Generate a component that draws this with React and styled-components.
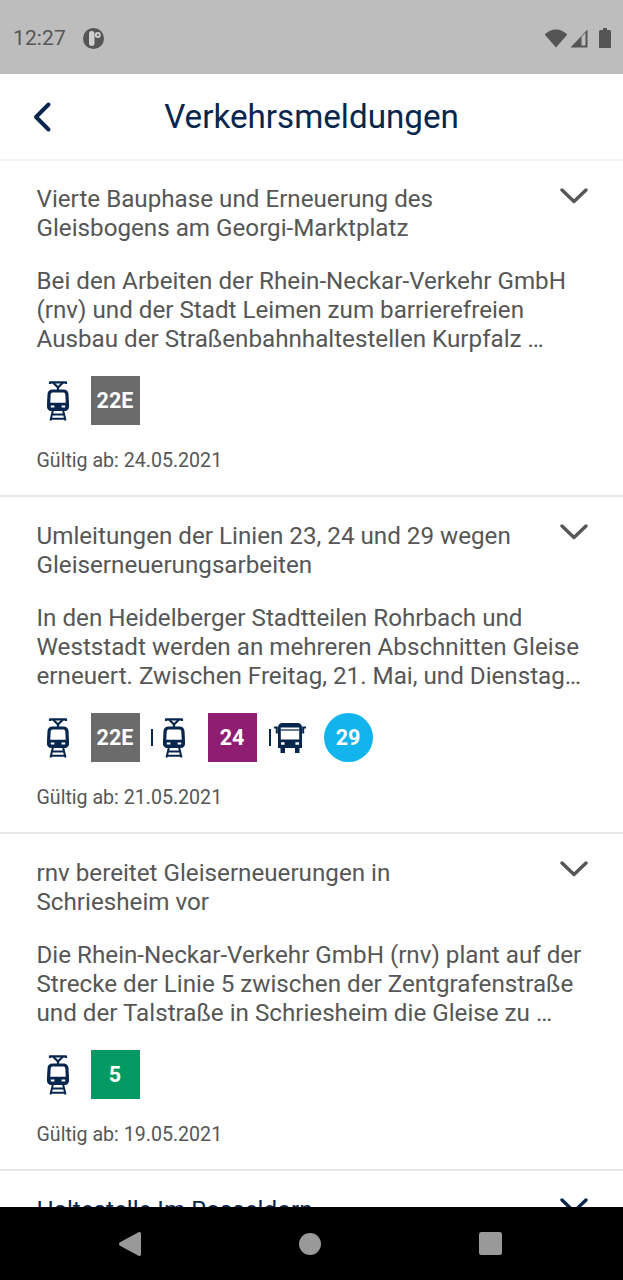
import React from 'react';
import styled, { createGlobalStyle } from 'styled-components';

const Global = createGlobalStyle`
  html, body { margin: 0; padding: 0; background: #fff; }
  body { font-family: Roboto, "Liberation Sans", sans-serif; }
`;
const Screen = styled.div`
  width: 623px; height: 1280px; display: flex; flex-direction: column; overflow: hidden; background: #fff;
`;
const StatusBar = styled.div`
  height: 74px; flex: none; background: #bdbdbd; display: flex; align-items: center; padding: 2px 12px 0 13px; box-sizing: border-box; color: #555;
`;
const Clock = styled.span`font-size: 21px; letter-spacing: .1px; color: #575757; margin-right: 17px;`;
const StatusRight = styled.div`margin-left: auto; display: flex; align-items: center; gap: 3px;`;
const Header = styled.header`
  height: 85px; flex: none; border-bottom: 2px solid #f3f3f3; display: flex; align-items: center; position: relative; justify-content: center;
`;
const BackButton = styled.div`position: absolute; left: 31px; top: 27px; display: flex;`;
const Title = styled.h1`margin: 0; font-size: 33.2px; font-weight: 400; color: #07264d;`;
const List = styled.div`flex: 1; min-height: 0; overflow: hidden;`;
const Item = styled.article`
  height: 337px; box-sizing: border-box; padding: 24.5px 37px 0 36.5px; border-bottom: 2px solid #e6e6e6; position: relative;
  &:first-child { height: 336px; padding-top: 23.5px; }
`;
const ItemTitle = styled.h2`
  margin: 0; font-size: 24.2px; line-height: 29px; font-weight: 400; color: ${p => p.$link ? '#07264d' : '#565656'}; width: 510px;
`;
const Chevron = styled.div`position: absolute; right: 35px; top: 27px; display: flex;`;
const Description = styled.p`margin: 24px 0 0; font-size: 24.2px; line-height: 29px; color: #565656; white-space: nowrap;`;
const Lines = styled.div`display: flex; align-items: center; height: 49px; margin-top: 22.5px;`;
const Badge = styled.span`
  width: 49px; height: 49px; display: flex; align-items: center; justify-content: center; flex: none;
  background: ${p => p.$bg}; color: #fff; font-size: 21.5px; font-weight: 700;
  border-radius: ${p => p.$round ? '50%' : '0'}; margin-left: ${p => p.$gap}px;
`;
const Separator = styled.span`width: 2px; height: 17px; background: #07264d; margin: 0 ${p => p.$after}px 0 ${p => p.$before}px; flex: none;`;
const TramSlot = styled.span`display: flex; flex: none; margin-left: ${p => p.$left}px;`;
const Valid = styled.div`margin-top: 24px; font-size: 19.6px; line-height: 24px; color: #565656;`;
const NavBar = styled.nav`
  height: 73px; flex: none; background: #000; display: flex; align-items: center; justify-content: space-between; padding: 0 121px 0 119px; box-sizing: border-box;
`;

const Tram = ({ left = 0 }) => (
  <TramSlot $left={left}>
    <svg width="22" height="40" viewBox="0 0 22 40">
      <g fill="none" stroke="#07264d" strokeLinejoin="round">
        <path d="M3 3V1.300h16V3" strokeWidth="2.200" />
        <path d="M6 1.500l5 5 5-5M11 6.500v2.500" strokeWidth="2.200" />
        <path d="M5.500 10h11c2 0 3.200 1.100 3.400 3.200l.6 11.500c.1 2.200-1 3.800-3.100 3.800H4.600c-2.100 0-3.200-1.600-3.100-3.800l.6-11.500c.2-2.100 1.400-3.200 3.400-3.200z" strokeWidth="3.200" />
      </g>
      <path d="M1 21.800h20V26c0 2-1.100 3.500-3.200 3.500H4.200C2.100 29.500 1 28 1 26z" fill="#07264d" />
      <path d="M3.800 24.400h3.600v2.200H3.800zM14.600 24.400h3.600v2.200h-3.600z" fill="#fff" />
      <path d="M3.500 39.500l2.500-10.500M18.500 39.500L16 29M4.500 33.500h13M3 37.800h16" stroke="#07264d" strokeWidth="2" fill="none" />
    </svg>
  </TramSlot>
);

const Bus = () => (
  <svg width="32" height="30" viewBox="0 0 32 30" style={{ flex: 'none' }}>
    <path d="M8.500 0h15c2.800 0 4.500 1.600 4.500 4.400V25H4V4.400C4 1.600 5.700 0 8.500 0z" fill="#07264d" />
    <path d="M6.800 4.500h18.400v12H6.800z" fill="#fff" />
    <path d="M6.800 7h18.400" stroke="#07264d" strokeWidth="1.200" />
    <path d="M7 19.300h3.600v2.400H7zM21.400 19.300H25v2.400h-3.600z" fill="#fff" />
    <path d="M6.500 24h4.500v6H6.500zM21 24h4.500v6H21zM0 3.500h3.800v7H1.800V5.500H0zM28.200 3.500H32v2h-1.800v5h-2z" fill="#07264d" />
  </svg>
);

const ChevronIcon = ({ color = '#565656' }) => (
  <svg width="28" height="16" viewBox="0 0 28 16">
    <path d="M2 2l12 11.500L26 2" fill="none" stroke={color} strokeWidth="3.400" strokeLinecap="round" strokeLinejoin="round" />
  </svg>
);

const items = [
  {
    title: ['Vierte Bauphase und Erneuerung des', 'Gleisbogens am Georgi-Marktplatz'],
    text: ['Bei den Arbeiten der Rhein-Neckar-Verkehr GmbH', '(rnv) und der Stadt Leimen zum barrierefreien', 'Ausbau der Straßenbahnhaltestellen Kurpfalz …'],
    date: '24.05.2021',
    lines: <><Tram left={10} /><Badge $bg="#6b6b6b" $gap={22}>22E</Badge></>,
  },
  {
    title: ['Umleitungen der Linien 23, 24 und 29 wegen', 'Gleiserneuerungsarbeiten'],
    text: ['In den Heidelberger Stadtteilen Rohrbach und', 'Weststadt werden an mehreren Abschnitten Gleise', 'erneuert. Zwischen Freitag, 21. Mai, und Dienstag…'],
    date: '21.05.2021',
    lines: <>
      <Tram left={10} /><Badge $bg="#6b6b6b" $gap={22}>22E</Badge><Separator $before={11} $after={10} /><Tram />
      <Badge $bg="#8f1e73" $gap={23}>24</Badge><Separator $before={12} $after={3} /><Bus />
      <Badge $bg="#11b4ec" $gap={18} $round>29</Badge>
    </>,
  },
  {
    title: ['rnv bereitet Gleiserneuerungen in', 'Schriesheim vor'],
    text: ['Die Rhein-Neckar-Verkehr GmbH (rnv) plant auf der', 'Strecke der Linie 5 zwischen der Zentgrafenstraße', 'und der Talstraße in Schriesheim die Gleise zu …'],
    date: '19.05.2021',
    lines: <><Tram left={10} /><Badge $bg="#049a63" $gap={22}>5</Badge></>,
  },
];

const Multi = ({ rows }) => rows.map((r, i) => <React.Fragment key={i}>{r}{i < rows.length - 1 && <br />}</React.Fragment>);

export default function App() {
  return (
    <Screen>
      <Global />
      <StatusBar>
        <Clock>12:27</Clock>
        <svg width="21" height="21" viewBox="0 0 21 21">
          <circle cx="10.500" cy="10.500" r="10.500" fill="#555" />
          <rect x="6" y="3" width="5.500" height="15" rx="2.700" fill="#d0d0d0" />
          <circle cx="14.800" cy="7" r="3" fill="#d0d0d0" />
          <circle cx="15" cy="7" r="1.200" fill="#777" />
        </svg>
        <StatusRight>
          <svg width="22" height="19" viewBox="0 0 22 19"><path d="M.3 5C3 2.400 6.800.5 11 .5S19 2.400 21.700 5c.4.400.4.900 0 1.300L11 18.500.3 6.300c-.4-.4-.4-.9 0-1.300z" fill="#555" /></svg>
          <svg width="18" height="19" viewBox="0 0 18 19"><path d="M.5 18.500L17.500.5v18z" fill="#555" /><path d="M11.500 16.500V8l4-4.500v13z" fill="#bdbdbd" /></svg>
          <svg width="12" height="20" viewBox="0 0 12 20" style={{ marginLeft: 8 }}><path d="M4 0h4v2h2.500c.8 0 1.500.7 1.500 1.500V19c0 .6-.5 1-1 1H1c-.6 0-1-.4-1-1V3.500C0 2.700.7 2 1.500 2H4z" fill="#555" /></svg>
        </StatusRight>
      </StatusBar>
      <Header>
        <BackButton>
          <svg width="24" height="32" viewBox="0 0 24 32"><path d="M17.500 3.500L5 16l12.500 12.500" fill="none" stroke="#07264d" strokeWidth="4" strokeLinecap="round" strokeLinejoin="round" /></svg>
        </BackButton>
        <Title>Verkehrsmeldungen</Title>
      </Header>
      <List>
        {items.map(it => (
          <Item key={it.date}>
            <ItemTitle><Multi rows={it.title} /></ItemTitle>
            <Chevron><ChevronIcon /></Chevron>
            <Description><Multi rows={it.text} /></Description>
            <Lines>{it.lines}</Lines>
            <Valid>Gültig ab: {it.date}</Valid>
          </Item>
        ))}
        <Item>
          <ItemTitle $link>Haltestelle Im Rosseldorn</ItemTitle>
          <Chevron><ChevronIcon color="#07264d" /></Chevron>
        </Item>
      </List>
      <NavBar>
        <svg width="22" height="24" viewBox="0 0 22 24"><path d="M20.200 0c1 0 1.800.6 1.800 1.800v20.400c0 1.200-.8 1.800-1.800 1.800-.4 0-.8-.2-1.200-.5L1 13.800c-1.300-.9-1.300-2.700 0-3.600L19 .5c.4-.3.800-.5 1.200-.5z" fill="#999" /></svg>
        <svg width="22" height="22" viewBox="0 0 22 22"><circle cx="11" cy="11" r="11" fill="#999" /></svg>
        <svg width="23" height="23" viewBox="0 0 23 23"><rect width="23" height="23" rx="2.500" fill="#999" /></svg>
      </NavBar>
    </Screen>
  );
}
